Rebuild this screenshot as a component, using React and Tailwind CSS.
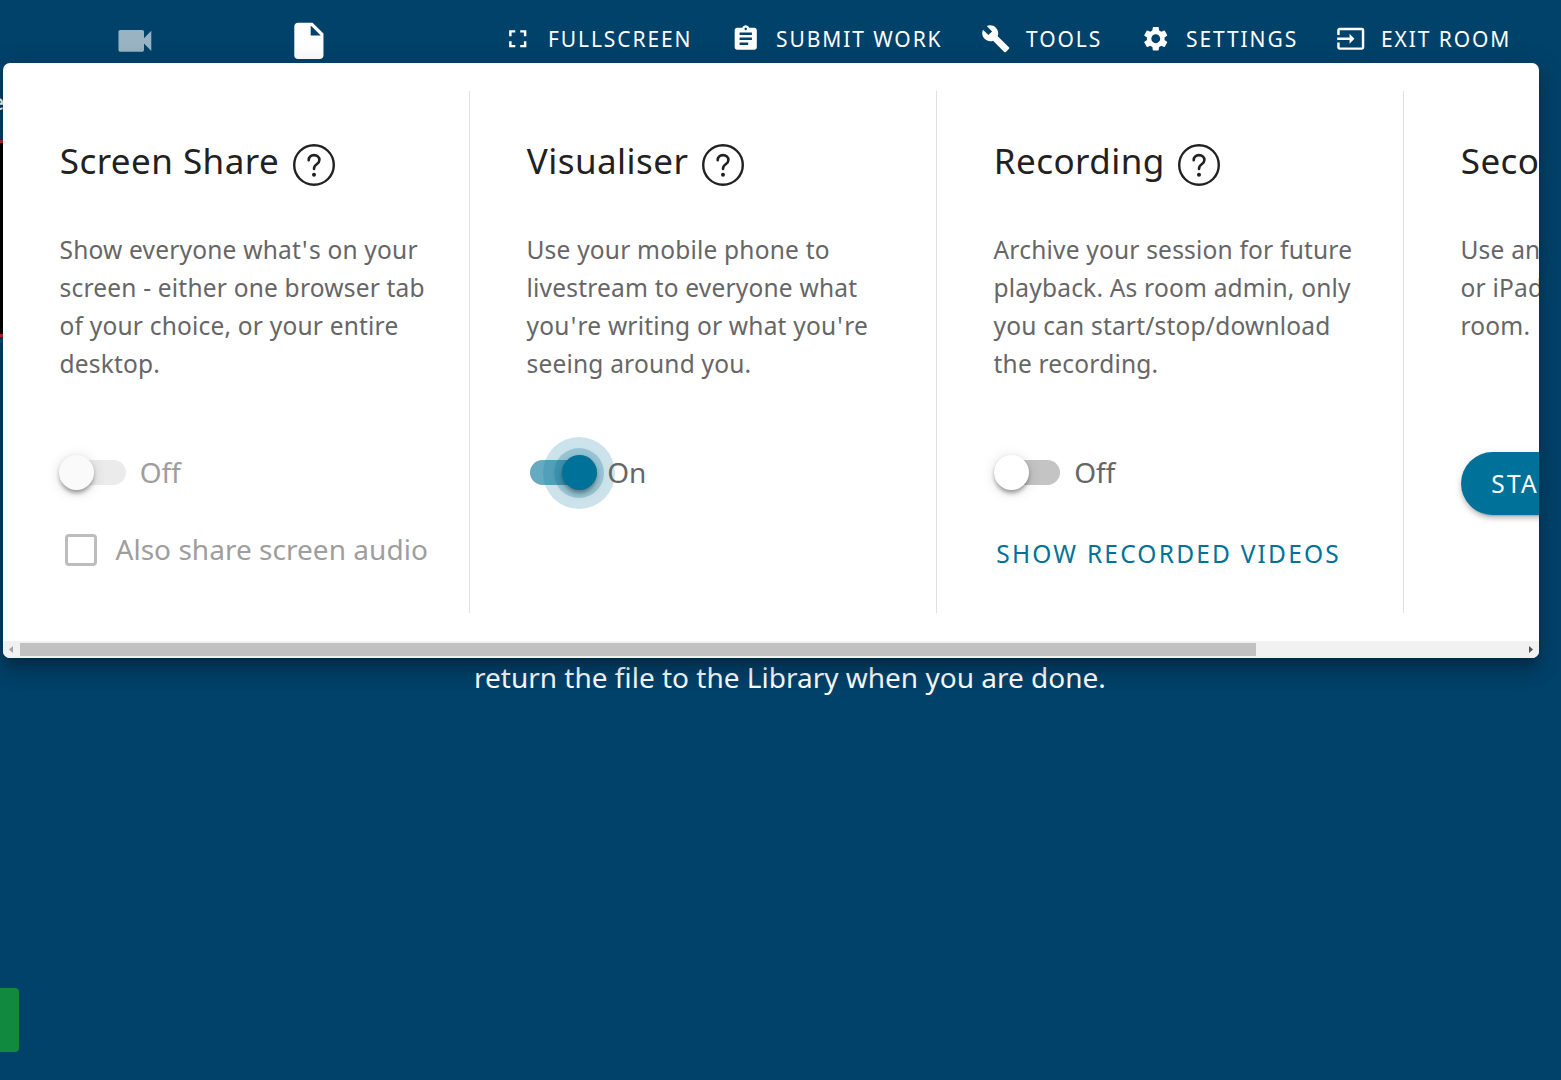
import React from "react";
import {
  MdAssignment,
  MdBuild,
  MdFullscreen,
  MdInput,
  MdInsertDriveFile,
  MdSettings,
  MdVideocam,
} from "react-icons/md";

const NAV = [
  { label: "Fullscreen", icon: MdFullscreen, width: "w-[228px]" },
  { label: "Submit work", icon: MdAssignment, width: "w-[250px]" },
  { label: "Tools", icon: MdBuild, width: "w-[160px]" },
  { label: "Settings", icon: MdSettings, width: "w-[195px]" },
  { label: "Exit room", icon: MdInput, width: "w-[190px]" },
];

function HelpIcon() {
  return (
    <svg className="mt-[7px] h-[42px] w-[42px] shrink-0" viewBox="0 0 42 42" fill="none" stroke="#212121">
      <circle cx="21" cy="21" r="19.8" strokeWidth="2.4" />
      <path
        d="M15.7 16.2c0-3 2.2-5.1 5.3-5.1s5.4 2.1 5.4 4.9c0 2.1-1.1 3.2-2.7 4.3-1.8 1.2-2.7 2.2-2.7 4.6"
        strokeWidth="2.6"
        strokeLinecap="round"
      />
      <circle cx="21" cy="30.7" r="2" fill="#212121" stroke="none" />
    </svg>
  );
}

/** Переключатель; ripple рисуется только у включённого */
function Switch({ on, disabled, label }) {
  const track = on
    ? "left-[3px] w-[67px] bg-[#66aac1]"
    : disabled
      ? "left-0 w-[66px] bg-[#ebebeb]"
      : "left-0 w-[66px] bg-[#c4c4c4]";
  const thumb = on ? "left-[35px] bg-[#007299]" : disabled ? "-left-px bg-[#fafafa]" : "left-0 bg-white";
  return (
    <div className="flex h-9 items-center">
      <div className="relative h-[35px] w-[67px]">
        <div className={`absolute top-[5px] h-[25px] rounded-full ${track}`} />
        {on && (
          <>
            <div className="absolute left-[16px] -top-[18px] size-[72px] rounded-full bg-[#007299]/20" />
            <div className="absolute left-[27px] -top-[7px] size-[50px] rounded-full bg-[#007299]/25" />
          </>
        )}
        <div
          className={`absolute top-0 size-[35px] rounded-full shadow-[0_5px_5px_-2px_rgba(0,0,0,0.26),0_2px_4px_0_rgba(0,0,0,0.16),0_2px_14px_0_rgba(0,0,0,0.14)] ${thumb}`}
        />
      </div>
      <span
        className={`relative text-[28px] leading-9 ${disabled ? "ml-[13px] text-[#9e9e9e]" : "ml-[13.5px] text-[#666]"}`}
      >
        {label}
      </span>
    </div>
  );
}

/** Строка текста; апострофам нужен небольшой воздух по бокам */
function Line({ text }) {
  return (
    <span className="block">
      {text.split("'").map((part, i) => (
        <React.Fragment key={i}>
          {i > 0 && <span className="px-[1.1px]">'</span>}
          {part}
        </React.Fragment>
      ))}
    </span>
  );
}

function Column({ title, lines, help = true, last, children }) {
  return (
    <section
      className={`flex w-[467px] shrink-0 flex-col pl-[56.75px] pt-[42px] ${last ? "" : "border-r border-[#e0e0e0]"}`}
    >
      <div className="flex h-14 items-center gap-[13.7px]">
        <h2 className="whitespace-nowrap text-[35px] leading-[48px] tracking-[0.45px] text-[#212121]">{title}</h2>
        {help && <HelpIcon />}
      </div>
      <p className="-ml-[0.25px] mt-[42px] whitespace-nowrap text-[24.5px] leading-[38px] tracking-[0.2px] text-[#666]">
        {lines.map((line) => (
          <Line key={line} text={line} />
        ))}
      </p>
      {children}
    </section>
  );
}

function Scrollbar() {
  return (
    <div className="flex h-[17px] items-center bg-[#f1f1f1]">
      <svg className="h-[17px] w-[17px]" viewBox="0 0 17 17">
        <path d="M10 5v7L6 8.5z" fill="#a3a3a3" />
      </svg>
      <div className="h-[13px] w-[1236px] bg-[#c1c1c1]" />
      <svg className="ml-auto h-[17px] w-[17px]" viewBox="0 0 17 17">
        <path d="M7 5v7l4-3.5z" fill="#505050" />
      </svg>
    </div>
  );
}

function ToolsPanel() {
  return (
    <div className="absolute left-[3px] top-[63px] flex h-[595px] w-[1536px] flex-col overflow-hidden rounded-[7px] bg-white shadow-[0_9px_9px_-5px_rgba(0,0,0,0.2),0_14px_18px_2px_rgba(0,0,0,0.14),0_5px_25px_4px_rgba(0,0,0,0.12)]">
      <div className="flex grow overflow-hidden py-7">
        <Column
          title="Screen Share"
          lines={["Show everyone what's on your", "screen - either one browser tab", "of your choice, or your entire", "desktop."]}
        >
          <div className="mt-[71px]">
            <Switch disabled label="Off" />
          </div>
          <label className="mt-[42px] flex items-center whitespace-nowrap text-[28px] leading-[38px] tracking-[0.03px] text-[#9e9e9e]">
            <span className="ml-[5px] mr-[18.75px] size-8 rounded-[4px] border-[3.5px] border-[#bdbdbd]" />
            <span className="-mt-[2px]">Also share screen audio</span>
          </label>
        </Column>
        <Column
          title="Visualiser"
          lines={["Use your mobile phone to", "livestream to everyone what", "you're writing or what you're", "seeing around you."]}
        >
          <div className="mt-[71px]">
            <Switch on label="On" />
          </div>
        </Column>
        <Column
          title="Recording"
          lines={["Archive your session for future", "playback. As room admin, only", "you can start/stop/download", "the recording."]}
        >
          <div className="mt-[71px]">
            <Switch label="Off" />
          </div>
          <button
            type="button"
            className="mt-[45px] whitespace-nowrap pl-[2.5px] text-left text-[24.5px] uppercase leading-[38px] tracking-[2.2px] text-[#007299]"
          >
            Show recorded videos
          </button>
        </Column>
        <Column title="Second Camera" help={false} last lines={["Use another phone", "or iPad in this", "room."]}>
          <button
            type="button"
            className="mt-[107px] h-[63px] w-[200px] rounded-full bg-[#007299] pl-[30.5px] pt-px text-left text-[24.5px] uppercase tracking-[2.2px] text-white shadow-[0_5px_2px_-4px_rgba(0,0,0,0.2),0_4px_4px_0_rgba(0,0,0,0.14),0_2px_9px_0_rgba(0,0,0,0.12)]"
          >
            Start
          </button>
        </Column>
      </div>
      <Scrollbar />
    </div>
  );
}

export default function App() {
  return (
    <div className="relative flex h-[1080px] w-[1561px] flex-col overflow-hidden bg-[#01426a] font-['Noto_Sans',sans-serif] text-white">
      <header className="flex h-[78px] items-center">
        <div className="ml-[113px] mt-1">
          <MdVideocam className="size-[43.75px] text-[#99b3c3]" />
        </div>
        <div className="ml-[130.25px] mt-1">
          <MdInsertDriveFile className="size-[43.75px]" />
        </div>
        <nav className="ml-[172.5px] flex">
          {NAV.map(({ label, icon: Icon, width }) => (
            <div key={label} className={`flex shrink-0 items-center gap-[15.25px] ${width}`}>
              <Icon className="size-[29.5px] shrink-0" />
              <span className="whitespace-nowrap text-[21px] uppercase leading-[30px] tracking-[1.9px]">{label}</span>
            </div>
          ))}
        </nav>
      </header>
      <main className="flex grow flex-col">
        <div className="flex h-[62px] items-center">
          <span className="-ml-[8px] -mt-[13px] text-[21px] font-medium">e</span>
        </div>
        <div className="h-[197px] w-[3px] border-y-[3px] border-[#c62828] bg-black" />
        <p className="ml-[474px] mt-[321px] whitespace-nowrap text-[28px] leading-[38px]">
          return the file to the Library when you are done.
        </p>
        <div className="mt-auto mb-7 h-16 w-[19px] rounded-r-[4px] bg-[#118a3f]" />
      </main>
      <ToolsPanel />
    </div>
  );
}
